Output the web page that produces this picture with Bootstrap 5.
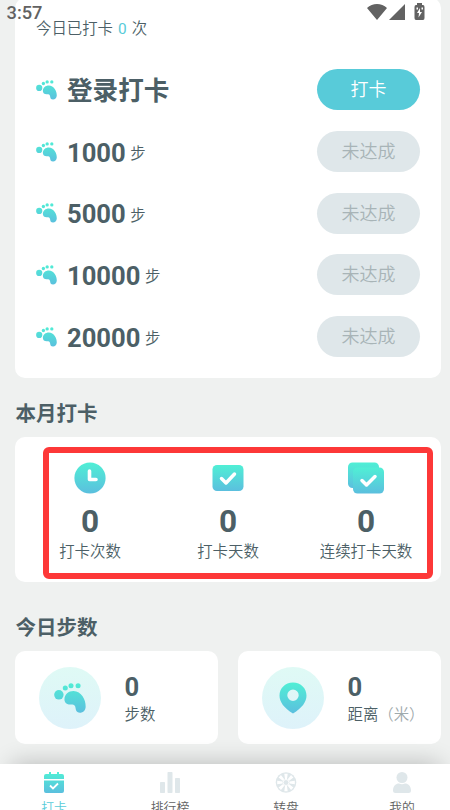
<!DOCTYPE html>
<html lang="zh-CN">
<head>
<meta charset="utf-8">
<meta name="viewport" content="width=device-width, initial-scale=1">
<title>打卡</title>
<link href="https://cdn.jsdelivr.net/npm/bootstrap@5.3.0/dist/css/bootstrap.min.css" rel="stylesheet">
<style>
html,body{height:810px;overflow:hidden}
body{background:#eff1f0;color:#4c5f66;font-family:Roboto,"Noto Sans CJK SC",sans-serif;font-weight:350;font-size:15.4px;line-height:20px}
svg{display:block;flex:none}
.screen{height:810px;position:relative;overflow:hidden}
.status{position:absolute;left:0;top:0;width:450px;height:26px;padding:3px 25px 0 6.5px;color:#626262;z-index:3}
.clock{font-size:18.3px;font-weight:500;line-height:20px}
.content{padding:0 9px 0 15px;height:764px}
.panel{background:#fff;border:0;border-radius:10px}
.goals{height:380px;margin-top:-2px;padding:21px 21px 0}
.goal-list{margin-top:20px}
.goal-row{height:61.7px}
.num{font-weight:700;font-size:25.6px;line-height:32px}
.goal-row .num{margin:2px 0 0 10px}
.step-unit{margin:5px 0 0 4.5px}
.pill{width:103px;height:41px;border-radius:21px;font-size:18px;font-weight:350;padding:0;border:0;line-height:41px;background:#dfe7ea;color:#a8b4b7}
.pill-on{background:#58cbd9;color:#fff}
.teal{color:#58cbd9}
.zero{font-weight:400;margin:0 1.3px}
.heading{font-weight:700;font-size:20.5px;line-height:28px;margin:0;padding-bottom:9px;padding-left:.5px}
.h-month{padding-top:22px}
.h-today{padding-top:32px}
.month{height:145px;padding:10px 8px 3px 28px}
.frame{border:6px solid #fd3838;border-radius:6px;height:132px;padding:9px 0 0}
.stat{width:138px;flex:none}
.first-stat{margin-left:-28px}
.stat .num{font-size:31.6px;line-height:36px;margin:10px 0 2px}
.disc{width:62px;height:62px;border-radius:50%;background:linear-gradient(#dffaf5,#def2fa)}
.mini{width:203px;height:93px;padding-left:23.5px}
.mini .num{line-height:34px;margin-bottom:1px}
.unit{color:#9faaad}
.tabs{position:absolute;left:-4px;top:764px;width:464px;height:60px;background:#fff;z-index:2}
.tabs-shade{position:absolute;left:12px;top:764px;width:428px;height:60px;box-shadow:0 0 24px rgba(0,0,0,.24);z-index:1}
.tab{width:116px;padding-top:7px;font-size:12.8px;color:#626262;line-height:18px}
.tab.teal{color:#58cbd9}
.tab svg{margin-bottom:6px}
</style>
<script src="https://cdn.jsdelivr.net/npm/bootstrap@5.3.0/dist/js/bootstrap.bundle.min.js"></script>
</head>
<body>
<svg width="0" height="0" class="position-absolute">
<defs>
<linearGradient id="g" gradientUnits="userSpaceOnUse" x1="0" y1="248" x2="0" y2="337"><stop stop-color="#50edd5"/><stop offset="1" stop-color="#5bbfde"/></linearGradient>
<linearGradient id="v" x1="0" y1="0" x2="0" y2="1"><stop stop-color="#50efd5"/><stop offset="1" stop-color="#5bbfde"/></linearGradient>
<symbol id="foot" viewBox="161 248 95 89"><g fill="url(#g)"><circle cx="175.500" cy="283" r="14"/><circle cx="194.500" cy="263" r="7.500"/><circle cx="211.500" cy="256" r="7.500"/><circle cx="232.500" cy="256" r="7.500"/><path d="M192 297C192 282 204 272 219 272C242 272 256 298 255 319C254 330 247 336 238 336C228 336 226 329 225 322C223 313 220 312 209 312C199 312 192 306 192 297Z"/></g></symbol>
</defs>
</svg>
<div class="screen">
  <div class="status d-flex justify-content-between">
    <span class="clock">3:57</span>
    <svg width="58" height="20" viewBox="0 0 58 20"><path fill="#626262" d="M0 5C5.500-.2 14.500-.2 20 5L10 17ZM38 1V17H22ZM49 2H50V0H55V2H56Q57.500 2 57.500 4V15Q57.500 17 56 17H49Q47.500 17 47.500 15V4Q47.500 2 49 2Z"/><path fill="#fff" d="M53 5 50 10H52L51.500 14.500 55 9H53ZM49.500 4.500H51V6.500H49.500ZM54.500 4.500H56V6.500H54.500Z"/></svg>
  </div>
  <main class="content">
    <section class="card panel goals">
      <div>今日已打卡 <span class="teal zero">0</span> 次</div>
      <div class="goal-list">
        <div class="goal-row d-flex align-items-center"><svg width="21" height="20"><use href="#foot"/></svg><span class="num">登录打卡</span><button class="btn pill pill-on ms-auto">打卡</button></div>
        <div class="goal-row d-flex align-items-center"><svg width="21" height="20"><use href="#foot"/></svg><span class="num">1000</span><span class="step-unit">步</span><button class="btn pill ms-auto">未达成</button></div>
        <div class="goal-row d-flex align-items-center"><svg width="21" height="20"><use href="#foot"/></svg><span class="num">5000</span><span class="step-unit">步</span><button class="btn pill ms-auto">未达成</button></div>
        <div class="goal-row d-flex align-items-center"><svg width="21" height="20"><use href="#foot"/></svg><span class="num">10000</span><span class="step-unit">步</span><button class="btn pill ms-auto">未达成</button></div>
        <div class="goal-row d-flex align-items-center"><svg width="21" height="20"><use href="#foot"/></svg><span class="num">20000</span><span class="step-unit">步</span><button class="btn pill ms-auto">未达成</button></div>
      </div>
    </section>
    <h2 class="heading h-month">本月打卡</h2>
    <section class="card panel month">
      <div class="frame d-flex">
        <div class="stat first-stat d-flex flex-column align-items-center">
          <svg width="32" height="32"><circle cx="16" cy="16" r="15.600" fill="url(#v)"/><path d="M15.500 9V17.500H22" fill="none" stroke="#fff" stroke-width="3.600" stroke-linecap="round" stroke-linejoin="round"/></svg>
          <span class="num">0</span><span>打卡次数</span>
        </div>
        <div class="stat d-flex flex-column align-items-center">
          <svg width="32" height="32"><rect x=".5" y="3" width="31" height="26" rx="4.500" fill="url(#v)"/><path d="M9.500 16.500 14 21 22.500 12" fill="none" stroke="#fff" stroke-width="3.500" stroke-linecap="round" stroke-linejoin="round"/></svg>
          <span class="num">0</span><span>打卡天数</span>
        </div>
        <div class="stat d-flex flex-column align-items-center">
          <svg width="36" height="32"><rect x="0" y="0.500" width="31" height="25.500" rx="4.500" fill="url(#v)"/><rect x="5" y="5.500" width="31" height="26" rx="4.500" fill="url(#v)"/><path d="M14 18.500 18.500 23 27 14.500" fill="none" stroke="#fff" stroke-width="3.500" stroke-linecap="round" stroke-linejoin="round"/></svg>
          <span class="num">0</span><span>连续打卡天数</span>
        </div>
      </div>
    </section>
    <h2 class="heading h-today">今日步数</h2>
    <section class="d-flex justify-content-between">
      <div class="card panel mini flex-row align-items-center">
        <div class="disc d-flex align-items-center justify-content-center"><svg width="32" height="30"><use href="#foot"/></svg></div>
        <div class="d-flex flex-column ms-4"><span class="num">0</span><span>步数</span></div>
      </div>
      <div class="card panel mini flex-row align-items-center">
        <div class="disc d-flex align-items-center justify-content-center"><svg width="28" height="32"><path fill="url(#v)" fill-rule="evenodd" d="M14 .5C6 .5 .5 6.500 .5 13.500C.5 20 5 26 14 31.500C23 26 27.500 20 27.500 13.500C27.500 6.500 22 .5 14 .5ZM14 7.500A5.700 5.700 0 1 1 14 18.900A5.700 5.700 0 1 1 14 7.500Z"/></svg></div>
        <div class="d-flex flex-column ms-4"><span class="num">0</span><span>距离<span class="unit">（米）</span></span></div>
      </div>
    </section>
  </main>
  <div class="tabs-shade"></div>
  <nav class="tabs d-flex">
    <div class="tab d-flex flex-column align-items-center teal"><svg width="20" height="22"><path fill="url(#v)" fill-rule="evenodd" d="M5 1H7V3H13V1H15V3H18Q20 3 20 5V8H0V5Q0 3 2 3H5ZM0 9.500H20V20Q20 22 18 22H2Q0 22 0 20Z"/><path d="M6 14.500 9 17.500 14 12.500" fill="none" stroke="#fff" stroke-width="1.800"/></svg>打卡</div>
    <div class="tab d-flex flex-column align-items-center"><svg width="20" height="22" fill="#dfe7ea"><rect y="11" width="5" height="11" rx=".7"/><rect x="7.500" y="1" width="5" height="21" rx=".7"/><rect x="15" y="7" width="5" height="15" rx=".7"/></svg>排行榜</div>
    <div class="tab d-flex flex-column align-items-center"><svg width="22" height="22" viewBox="-11 -11.500 22 22"><circle r="10.300" fill="#dfe7ea"/><g fill="#fff"><path id="spoke" d="M-1.700-8.800H1.700L1-3.500H-1ZM-1.700 8.800H1.700L1 3.500H-1ZM-8.800-1.700V1.700L-3.500 1V-1ZM8.800-1.700V1.700L3.500 1V-1Z"/><use href="#spoke" transform="rotate(45)"/></g><circle r="3" fill="#dfe7ea" stroke="#fff"/></svg>转盘</div>
    <div class="tab d-flex flex-column align-items-center"><svg width="18" height="22" fill="#dfe7ea"><circle cx="9" cy="6.500" r="5.500"/><path d="M0 19.500C0 15 3 12.500 6 12.500Q9 14 12 12.500C15 12.500 18 15 18 19.500Q18 22 15.500 22H2.500Q0 22 0 19.500Z"/></svg>我的</div>
  </nav>
</div>
</body>
</html>
